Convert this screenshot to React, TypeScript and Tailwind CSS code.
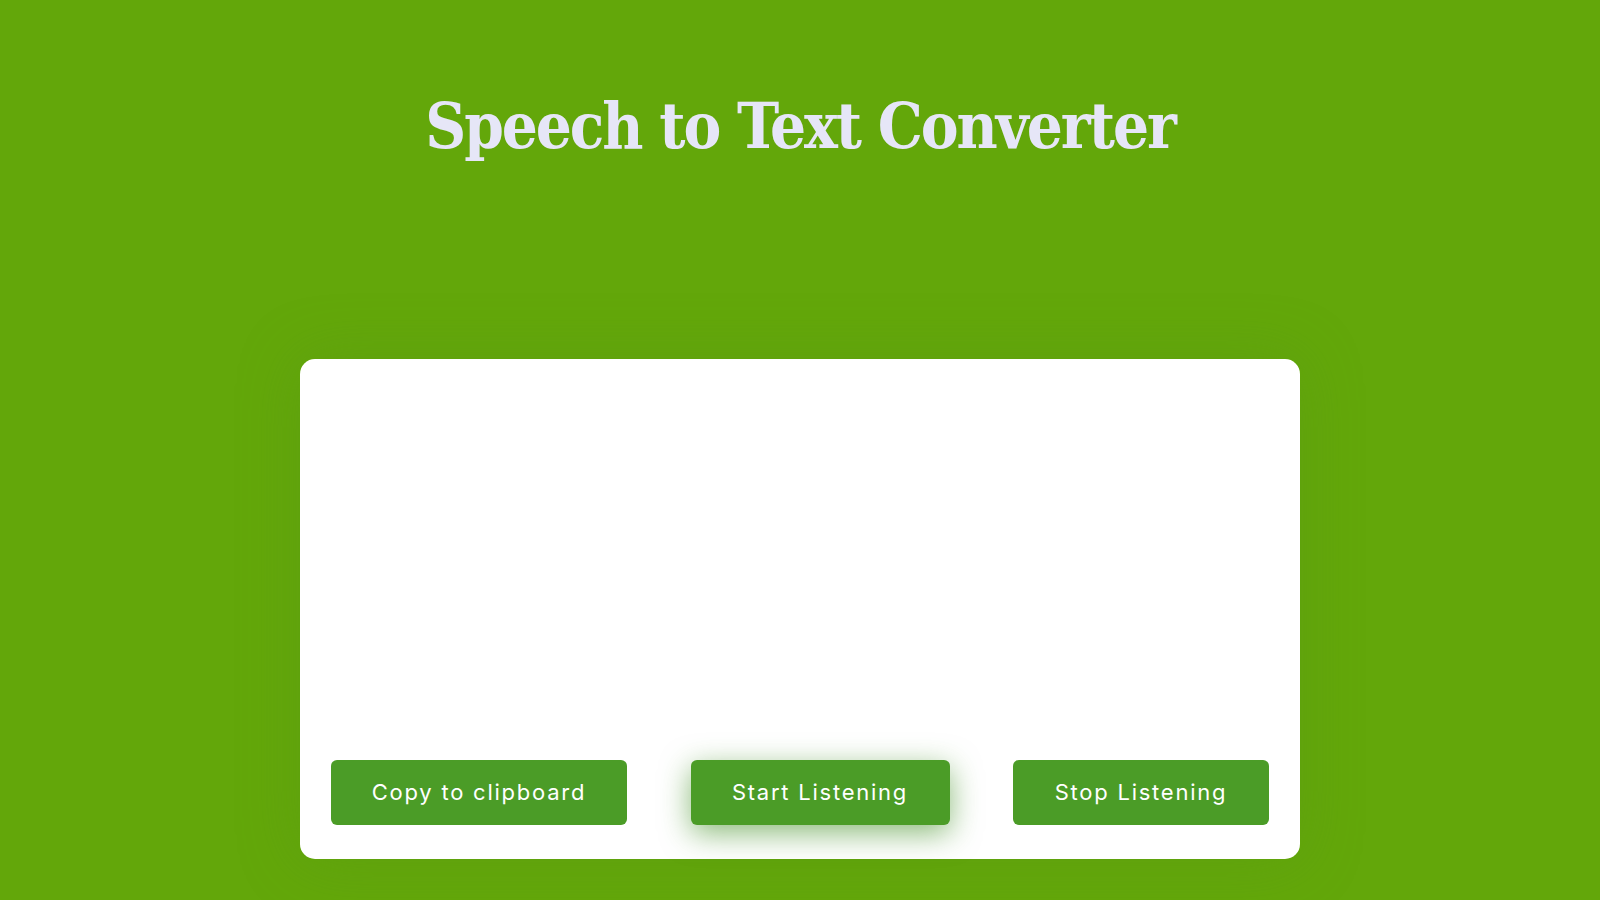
export default function App() {
  return (
    <div className="min-h-screen w-full bg-[#63a70a] flex flex-col items-center">
      <h1 className="mt-[88px] text-[63px] leading-[76px] font-bold text-[#e6e6f7] [font-family:'DejaVu_Serif_Condensed','DejaVu_Serif',serif] tracking-[-2px]">
        Speech to Text Converter
      </h1>

      <div className="mt-[195px] w-[1000px] h-[500px] bg-white rounded-[15px] shadow-[0_0_60px_rgba(85,150,25,0.35)] flex flex-col justify-end px-[31px] pb-[34px]">
        <div className="flex items-center justify-between">
          <button className="h-[65px] w-[296px] rounded-[6px] bg-[#4b9c27] text-white text-[22px] tracking-[0.08em] [font-family:Inter,sans-serif]">
            Copy to clipboard
          </button>
          <button className="h-[65px] w-[259px] rounded-[6px] bg-[#4b9c27] text-white text-[22px] tracking-[0.08em] [font-family:Inter,sans-serif] shadow-[0_8px_30px_rgba(60,140,30,0.6)]">
            Start Listening
          </button>
          <button className="h-[65px] w-[256px] rounded-[6px] bg-[#4b9c27] text-white text-[22px] tracking-[0.08em] [font-family:Inter,sans-serif]">
            Stop Listening
          </button>
        </div>
      </div>
    </div>
  );
}
